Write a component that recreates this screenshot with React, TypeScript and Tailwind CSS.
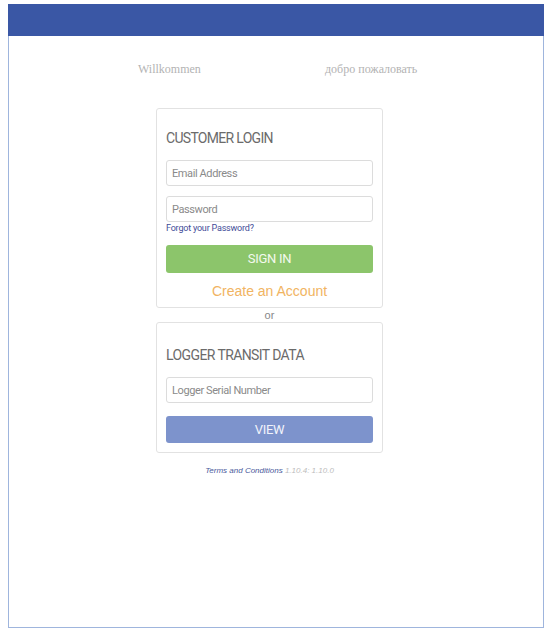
import React from "react";

const condensed = "font-['Roboto',sans-serif]";

const Field: React.FC<{ placeholder: string; type?: string; className?: string }> = ({
  placeholder,
  type = "text",
  className = "",
}) => (
  <input
    type={type}
    placeholder={placeholder}
    className={`block w-full h-[26px] rounded-[3px] border border-[#dcdcdc] bg-white pl-[5px] text-[11px] tracking-[-0.4px] text-[#555] placeholder:text-[#8a8a8a] outline-none ${condensed} ${className}`}
  />
);

const App: React.FC = () => {
  return (
    <div className="min-h-screen bg-white">
      {/* Frame */}
      <div className="ml-2 mt-1 w-[536px] h-[624px] flex flex-col border-x border-b border-[#9fb5dd]">
        {/* Header bar */}
        <div className="h-8 -mx-px bg-[#3a57a5]" />

        {/* Greetings */}
        <div className="mt-[25px] flex pl-[129px] font-['Liberation_Serif',serif] text-[12px] leading-4 text-[#b3b3b3]">
          <span className="w-[187px]">Willkommen</span>
          <span>добро пожаловать</span>
        </div>

        <div className="ml-[147px] w-[227px] mt-[31px] flex flex-col">
          {/* Customer login card */}
          <div className="rounded-[3px] border border-[#e2e2e2] px-[9px] pb-[6px]">
            <h2 className={`mt-[19px] h-5 leading-5 text-[14px] tracking-[-0.7px] text-[#6b6b6b] ${condensed}`}>
              CUSTOMER LOGIN
            </h2>
            <Field placeholder="Email Address" className="mt-3" />
            <Field placeholder="Password" type="password" className="mt-[10px]" />
            <a href="#" className={`block h-3 leading-3 text-[9px] tracking-[-0.2px] text-[#3f4c98] ${condensed}`}>
              Forgot your Password?
            </a>
            <button className={`mt-[11px] w-full h-7 rounded-[3px] bg-[#8cc56b] text-[13px] tracking-[-0.3px] text-[#f3f9ee] ${condensed}`}>
              SIGN IN
            </button>
            <div className="mt-2 h-5 leading-5 text-center font-['Liberation_Sans',sans-serif] text-[14px] text-[#f1b462]">
              Create an Account
            </div>
          </div>

          <div className="h-[14px] leading-[14px] text-center font-['Liberation_Sans',sans-serif] text-[11px] text-[#888]">
            or
          </div>

          {/* Logger transit card */}
          <div className="rounded-[3px] border border-[#e2e2e2] px-[9px] pb-[9px]">
            <h2 className={`mt-[22px] h-5 leading-5 text-[14px] tracking-[-0.6px] text-[#6b6b6b] ${condensed}`}>
              LOGGER TRANSIT DATA
            </h2>
            <Field placeholder="Logger Serial Number" className="mt-3" />
            <button className={`mt-[13px] w-full h-[27px] rounded-[3px] bg-[#7d93cc] text-[13px] tracking-[-0.3px] text-[#f1f4fb] ${condensed}`}>
              VIEW
            </button>
          </div>

          <div className="mt-3 h-3 leading-3 text-center font-['Liberation_Sans',sans-serif] italic text-[8px]">
            <a href="#" className="text-[#4a5a9c]">Terms and Conditions</a>
            <span className="text-[#bdbdbd]"> 1.10.4: 1.10.0</span>
          </div>
        </div>
      </div>
    </div>
  );
};

export default App;
